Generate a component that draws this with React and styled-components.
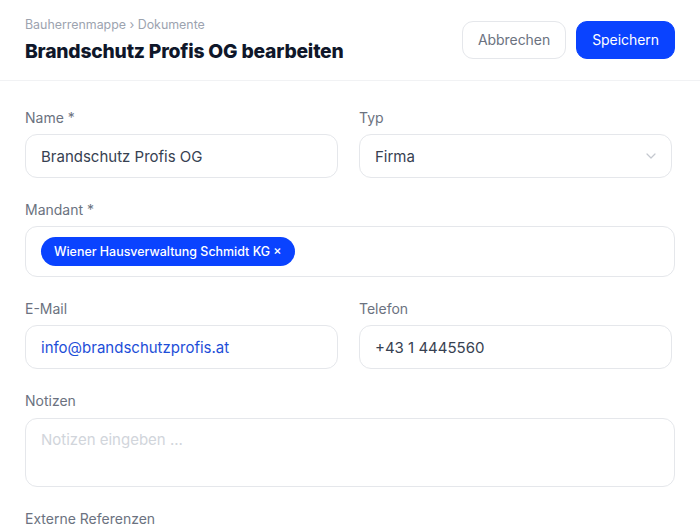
import React from "react";
import styled, { createGlobalStyle } from "styled-components";

const Global = createGlobalStyle`
  html, body { margin: 0; padding: 0; background: #ffffff; }
  body { font-family: Inter, "Noto Sans", sans-serif; -webkit-font-smoothing: antialiased; }
  * { box-sizing: border-box; }
`;

const Page = styled.div`
  width: 700px;
  height: 525px;
  overflow: hidden;
  background: #fff;
`;

const Header = styled.header`
  height: 81px;
  border-bottom: 1px solid #f1f2f4;
  display: flex;
  align-items: center;
  justify-content: space-between;
  padding: 0 25px 1px 25px;
`;

const TitleBlock = styled.div`
  display: flex;
  flex-direction: column;
  gap: 6px;
  margin-top: 1px;
`;

const Breadcrumb = styled.div`
  font-size: 12.4px;
  line-height: 16px;
  color: #9ca3af;
`;

const Title = styled.h1`
  margin: 0;
  font-size: 19.3px;
  line-height: 24px;
  font-weight: 800;
  color: #0f172a;
  letter-spacing: -0.2px;
`;

const Actions = styled.div`
  display: flex;
  gap: 10px;
`;

const Button = styled.button`
  height: 38px;
  padding: 0 15px;
  border-radius: 11px;
  font-family: inherit;
  font-size: 14px;
  font-weight: 400;
  letter-spacing: -0.05px;
  border: 1px solid ${(p) => (p.$primary ? "#0a43ff" : "#e5e7eb")};
  background: ${(p) => (p.$primary ? "#0a43ff" : "#ffffff")};
  color: ${(p) => (p.$primary ? "#ffffff" : "#6b7280")};
`;

const Form = styled.div`
  padding: 27px 25px 0 25px;
  display: flex;
  flex-direction: column;
  gap: 22px;
`;

const Row = styled.div`
  display: grid;
  grid-template-columns: 1fr 1fr;
  column-gap: 21px;
  margin-right: 3px;
`;

const Field = styled.div`
  display: flex;
  flex-direction: column;
  gap: ${(p) => p.$gap || 6}px;
`;

const Label = styled.label`
  font-size: 14px;
  line-height: 20px;
  color: #6b7280;
`;

const Input = styled.div`
  height: ${(p) => p.$h || 44}px;
  border: 1px solid #e5e7eb;
  border-radius: 12px;
  padding: ${(p) => (p.$top ? "11px 15px 0" : "0 15px")};
  display: flex;
  align-items: ${(p) => (p.$top ? "flex-start" : "center")};
  justify-content: space-between;
  font-size: 15px;
  color: ${(p) => p.$color || "#374151"};
  background: #fff;
`;

const ChipWrap = styled.div`
  height: 51px;
  border: 1px solid #e5e7eb;
  border-radius: 12px;
  padding: 0 15px;
  display: flex;
  align-items: center;
`;

const Chip = styled.span`
  display: inline-flex;
  align-items: center;
  height: 29px;
  padding: 0 13px;
  border-radius: 15px;
  background: #0a43ff;
  color: #fff;
  font-size: 12.45px;
  font-weight: 500;
`;

const Chevron = () => (
  <svg width="10" height="6" viewBox="0 0 10 6" fill="none">
    <path d="M1 1l4 4 4-4" stroke="#c4c8cf" strokeWidth="1.2" strokeLinecap="round" strokeLinejoin="round" />
  </svg>
);

export default function App() {
  return (
    <Page>
      <Global />
      <Header>
        <TitleBlock>
          <Breadcrumb>Bauherrenmappe › Dokumente</Breadcrumb>
          <Title>Brandschutz Profis OG bearbeiten</Title>
        </TitleBlock>
        <Actions>
          <Button>Abbrechen</Button>
          <Button $primary>Speichern</Button>
        </Actions>
      </Header>
      <Form>
        <Row>
          <Field>
            <Label>Name *</Label>
            <Input>Brandschutz Profis OG</Input>
          </Field>
          <Field>
            <Label>Typ</Label>
            <Input>
              Firma
              <Chevron />
            </Input>
          </Field>
        </Row>
        <Field>
          <Label>Mandant *</Label>
          <ChipWrap>
            <Chip>Wiener Hausverwaltung Schmidt KG ×</Chip>
          </ChipWrap>
        </Field>
        <Row>
          <Field>
            <Label>E-Mail</Label>
            <Input $color="#1d4ed8">info@brandschutzprofis.at</Input>
          </Field>
          <Field>
            <Label>Telefon</Label>
            <Input>+43 1 4445560</Input>
          </Field>
        </Row>
        <Field $gap={7}>
          <Label>Notizen</Label>
          <Input $h={69} $top $color="#d1d5db">Notizen eingeben ...</Input>
        </Field>
        <Field>
          <Label>Externe Referenzen</Label>
        </Field>
      </Form>
    </Page>
  );
}
